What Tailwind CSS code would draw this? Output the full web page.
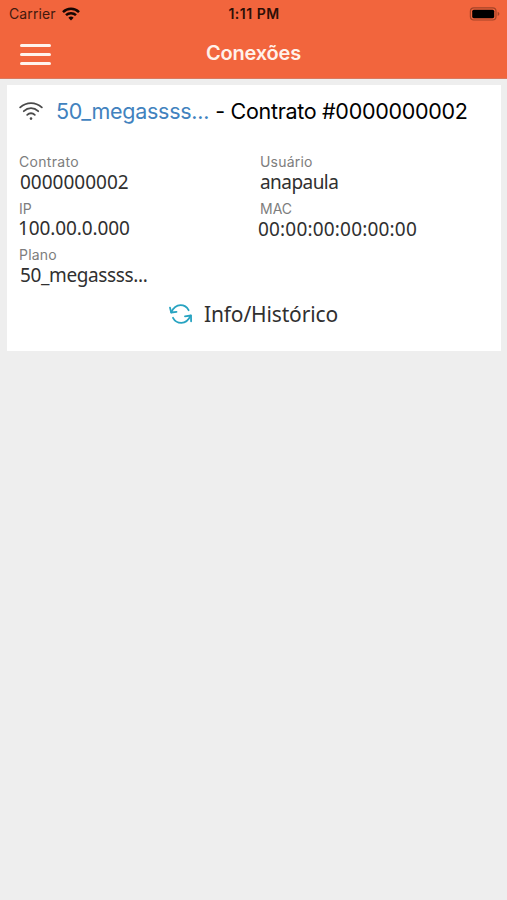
<!DOCTYPE html>
<html lang="pt-BR">
<head>
    <meta charset="UTF-8">
    <meta name="viewport" content="width=device-width, initial-scale=1.0">
    <title>Conexões</title>
    <script src="https://cdn.jsdelivr.net/npm/@tailwindcss/browser@4"></script>
</head>
<body class="bg-[#eeeeee] min-h-screen font-['Inter','Liberation_Sans',sans-serif] text-black">
    <header class="h-[79px] bg-[#f2653d] border-b border-[#d97a60]">
        <!-- Status bar -->
        <div class="h-7 grid grid-cols-3 items-center pl-[9px] pr-[7px]">
            <div class="flex items-center gap-[6px] text-[14px] leading-7 text-[#42190e]">
                <span class="tracking-[0.12px]">Carrier</span>
                <svg class="w-[18px] h-[14px]" viewBox="0 0 18 14" fill="none" stroke="#160603" stroke-width="2.5">
                    <path d="M1 5.1a11.4 11.4 0 0 1 16 0"/>
                    <path d="M4 8.2a7.1 7.1 0 0 1 10 0"/>
                    <path d="M6.4 10.8a3.7 3.7 0 0 1 5.2 0L9 13.4z" fill="#160603" stroke="none"/>
                </svg>
            </div>
            <div class="-ml-[1px] text-center text-[14px] leading-7 font-semibold text-[#2c0f07] tracking-[0.5px]">1:11 PM</div>
            <svg class="w-[31px] h-[14px] justify-self-end" viewBox="0 0 31 14">
                <rect x="1.4" y="0.8" width="25.6" height="12.2" rx="3.4" fill="none" stroke="#a34428" stroke-width="1.2"/>
                <rect x="3.2" y="2.7" width="22" height="8.5" rx="1.6" fill="#000"/>
                <path d="M28.7 4.8c2.2.8 2.2 3.4 0 4.2z" fill="#a34428"/>
            </svg>
        </div>
        <!-- Title bar -->
        <div class="h-[50px] grid grid-cols-3 items-center px-5">
            <div class="flex flex-col gap-[6px] w-[31px] pt-[3px]">
                <span class="h-[3px] rounded-full bg-[#fff3ed]"></span>
                <span class="h-[3px] rounded-full bg-[#fff3ed]"></span>
                <span class="h-[3px] rounded-full bg-[#fff3ed]"></span>
            </div>
            <h1 class="text-center text-[20px] leading-6 font-semibold text-[#fff1ea] tracking-[-0.2px]">Conexões</h1>
        </div>
    </header>

    <!-- Connection card -->
    <main class="mt-[6px] ml-[7px] mr-[6px] h-[266px] bg-white">
        <div class="flex items-center pt-[11px] pl-[12px] text-[21.5px] leading-[30px] whitespace-nowrap">
            <svg class="w-6 h-[19px] mr-[13px]" viewBox="0 0 24 19" fill="none" stroke="#4a4a4a" stroke-width="1.8" stroke-linecap="round">
                <path d="M1.2 5.4c6.3-5.7 15.3-5.7 21.6 0"/>
                <path d="M4.8 9.2c4.3-4 10.1-4 14.4 0"/>
                <path d="M8.2 12.9c2.2-2.2 5.4-2.2 7.6 0"/>
                <circle cx="12" cy="16.6" r="1.3" fill="#4a4a4a" stroke="none"/>
            </svg>
            <span class="text-[#4182be] tracking-[-0.26px]">50_megassss...</span>
            <span class="ml-[6px] tracking-[-0.3px]">- Contrato #0000000002</span>
        </div>

        <div class="mt-[28px] ml-[12px] grid grid-cols-[241px_1fr] text-[#303030]">
            <div class="h-[46.5px]">
                <div class="text-[14px] leading-4 text-[#7d7d7d] tracking-[0.3px]">Contrato</div>
                <div class="ml-[1px] font-['Noto_Sans',sans-serif] text-[19px] leading-6">0000000002</div>
            </div>
            <div class="h-[46.5px]">
                <div class="text-[14px] leading-4 text-[#7d7d7d] tracking-[0.2px]">Usuário</div>
                <div class="font-['Noto_Sans',sans-serif] text-[19px] leading-6 tracking-[-0.55px]">anapaula</div>
            </div>
            <div class="h-[46.5px]">
                <div class="text-[14px] leading-4 text-[#7d7d7d]">IP</div>
                <div class="-ml-[1px] font-['Noto_Sans',sans-serif] text-[19px] leading-[22px] tracking-[-0.1px]">100.00.0.000</div>
            </div>
            <div class="h-[46.5px]">
                <div class="text-[14px] leading-4 text-[#7d7d7d]">MAC</div>
                <div class="-ml-[2px] font-['Noto_Sans',sans-serif] text-[19px] leading-6 tracking-[0.18px]">00:00:00:00:00:00</div>
            </div>
            <div>
                <div class="text-[14px] leading-4 text-[#7d7d7d] tracking-[0.2px]">Plano</div>
                <div class="ml-[1px] font-['Noto_Sans',sans-serif] text-[19px] leading-6 tracking-[-0.38px]">50_megassss...</div>
            </div>
        </div>

        <div class="mt-[13px] ml-[162px] flex items-center font-['Noto_Sans',sans-serif] text-[21px] leading-7 text-[#303030] whitespace-nowrap">
            <svg class="w-[23px] h-5 mr-[12px]" viewBox="0 0 23 20" fill="none" stroke="#27a3c1" stroke-width="1.8" stroke-linecap="round" stroke-linejoin="round">
                <path d="M2.3 8.4C4.5 3.5 7.5 1.2 11.5 1.2c3.5 0 6.5 1.9 8.1 5"/>
                <path d="M1 3.6l1.2 4.9 5.3-.7"/>
                <path d="M21.6 11.6c-2.2 4.9-5.2 7.2-9.2 7.2-3.5 0-6.8-1.9-8.4-5"/>
                <path d="M16 12.4l6-.9.1 5.8"/>
            </svg>
            <span class="tracking-[-0.15px]">Info/Histórico</span>
        </div>
    </main>
</body>
</html>
